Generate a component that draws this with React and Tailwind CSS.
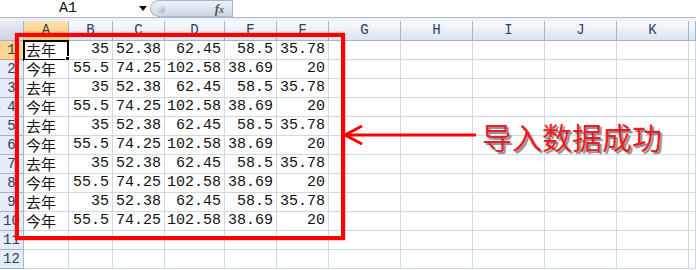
import React from "react";

const cols = ["A", "B", "C", "D", "E", "F", "G", "H", "I", "J", "K", ""];

const lastYear = ["去年", "35", "52.38", "62.45", "58.5", "35.78"];
const thisYear = ["今年", "55.5", "74.25", "102.58", "38.69", "20"];

const rows = Array.from({ length: 12 }, (_, i) =>
  i < 10 ? (i % 2 === 0 ? lastYear : thisYear) : []
);

const mono = { fontFamily: '"Liberation Mono", "DejaVu Sans Mono", monospace' };
const cjk = { fontFamily: '"Noto Sans CJK SC", "Liberation Sans", sans-serif' };

const FormulaBar = () => (
  <div className="flex h-[18px] bg-white border-b border-[#a7bad0]">
    {/* name box */}
    <div className="w-[136px] flex items-center justify-center text-[15px] text-[#111] pt-[1px]" style={mono}>
      A1
    </div>
    <div className="w-[14px] flex items-center justify-center">
      <svg width="8" height="5" viewBox="0 0 8 5">
        <path d="M0 0 L8 0 L4 5 Z" fill="#111" />
      </svg>
    </div>
    {/* fx pill */}
    <div className="w-[82px] h-[17px] rounded-l-full bg-gradient-to-b from-[#eef2f8] to-[#cdd8e6] border border-[#a9b8cb] border-r-0 flex items-center justify-between pl-[6px] pr-[8px]">
      <span className="w-[8px] h-[8px] rounded-full bg-gradient-to-br from-[#ffffff] to-[#9aa9bc]" />
      <span className="text-[13px] italic text-[#555] font-bold" style={{ fontFamily: '"Liberation Serif", serif' }}>
        f<span className="text-[10px]">x</span>
      </span>
    </div>
    <div className="flex-1 bg-white border-l border-[#a9b8cb]" />
  </div>
);

const Grid = () => (
  <div className="grid grid-cols-[24px_45px_44px_52px_60px_52px_52px_72px_72px_72px_72px_72px_1fr]">
    {/* header row */}
    <div className="h-[20px] bg-gradient-to-b from-[#e6ecf5] to-[#cad6e6] border-r border-b border-[#9eb6ce] relative">
      <svg className="absolute right-[2px] bottom-[2px]" width="11" height="11" viewBox="0 0 11 11">
        <path d="M11 0 L11 11 L0 11 Z" fill="#d5dfec" />
      </svg>
    </div>
    {cols.map((c, i) => (
      <div
        key={i}
        className={`h-[20px] flex items-center justify-center text-[14px] border-r border-b border-[#9eb6ce] ${
          i === 0
            ? "bg-gradient-to-b from-[#fbe3b3] to-[#f4c773] text-[#3b3b3b]"
            : "bg-gradient-to-b from-[#f9fbfd] to-[#dce4ee] text-[#27415f]"
        }`}
        style={mono}
      >
        {c}
      </div>
    ))}

    {rows.map((r, ri) => (
      <React.Fragment key={ri}>
        <div
          className={`h-[19px] flex items-center justify-center text-[14px] border-r border-b ${
            ri === 0
              ? "bg-[#f8d695] border-[#c9a45b] text-[#3b3b3b]"
              : "bg-[#e4ecf7] border-[#9eb6ce] text-[#27415f]"
          }`}
          style={mono}
        >
          {ri + 1}
        </div>
        {cols.map((c, ci) => (
          <div
            key={ci}
            className={`h-[19px] flex items-center border-r border-b border-[#d0d7e5] bg-white text-[#111] relative ${
              ci === 0 ? "justify-start pl-[2px] text-[15px]" : "justify-end pr-[3px] text-[15px]"
            }`}
            style={ci === 0 ? cjk : mono}
          >
            {r[ci]}
            {ri === 0 && ci === 0 && (
              <>
                <div className="absolute -left-[1px] -top-[1px] w-[46px] h-[21px] border-2 border-black" />
                <div className="absolute -right-[3px] -bottom-[3px] w-[6px] h-[6px] bg-black border border-white" />
              </>
            )}
          </div>
        ))}
      </React.Fragment>
    ))}
  </div>
);

export default function App() {
  return (
    <div className="relative w-[696px] h-[270px] overflow-hidden bg-white">
      <FormulaBar />
      <div className="h-[3px] bg-[#eef2f7]" />
      <Grid />

      {/* red highlight box */}
      <div className="absolute left-[15px] top-[33px] w-[330px] h-[207px] border-[4px] border-[#ff0000] shadow-[0_0_2px_rgba(255,0,0,0.6)]" />

      {/* arrow */}
      <svg className="absolute left-[340px] top-[120px]" width="140" height="30" viewBox="0 0 140 30">
        <path d="M5 15 L136 15" stroke="#ff0000" strokeWidth="3" />
        <path d="M22 6 L5 15 L22 24" stroke="#ff0000" strokeWidth="3" fill="none" />
      </svg>

      {/* label */}
      <div
        className="absolute left-[482px] top-[116px] text-[30px] leading-[40px] text-[#ec1c24] [text-shadow:2px_2px_1px_#8a8a8a]"
        style={cjk}
      >
        导入数据成功
      </div>
    </div>
  );
}
